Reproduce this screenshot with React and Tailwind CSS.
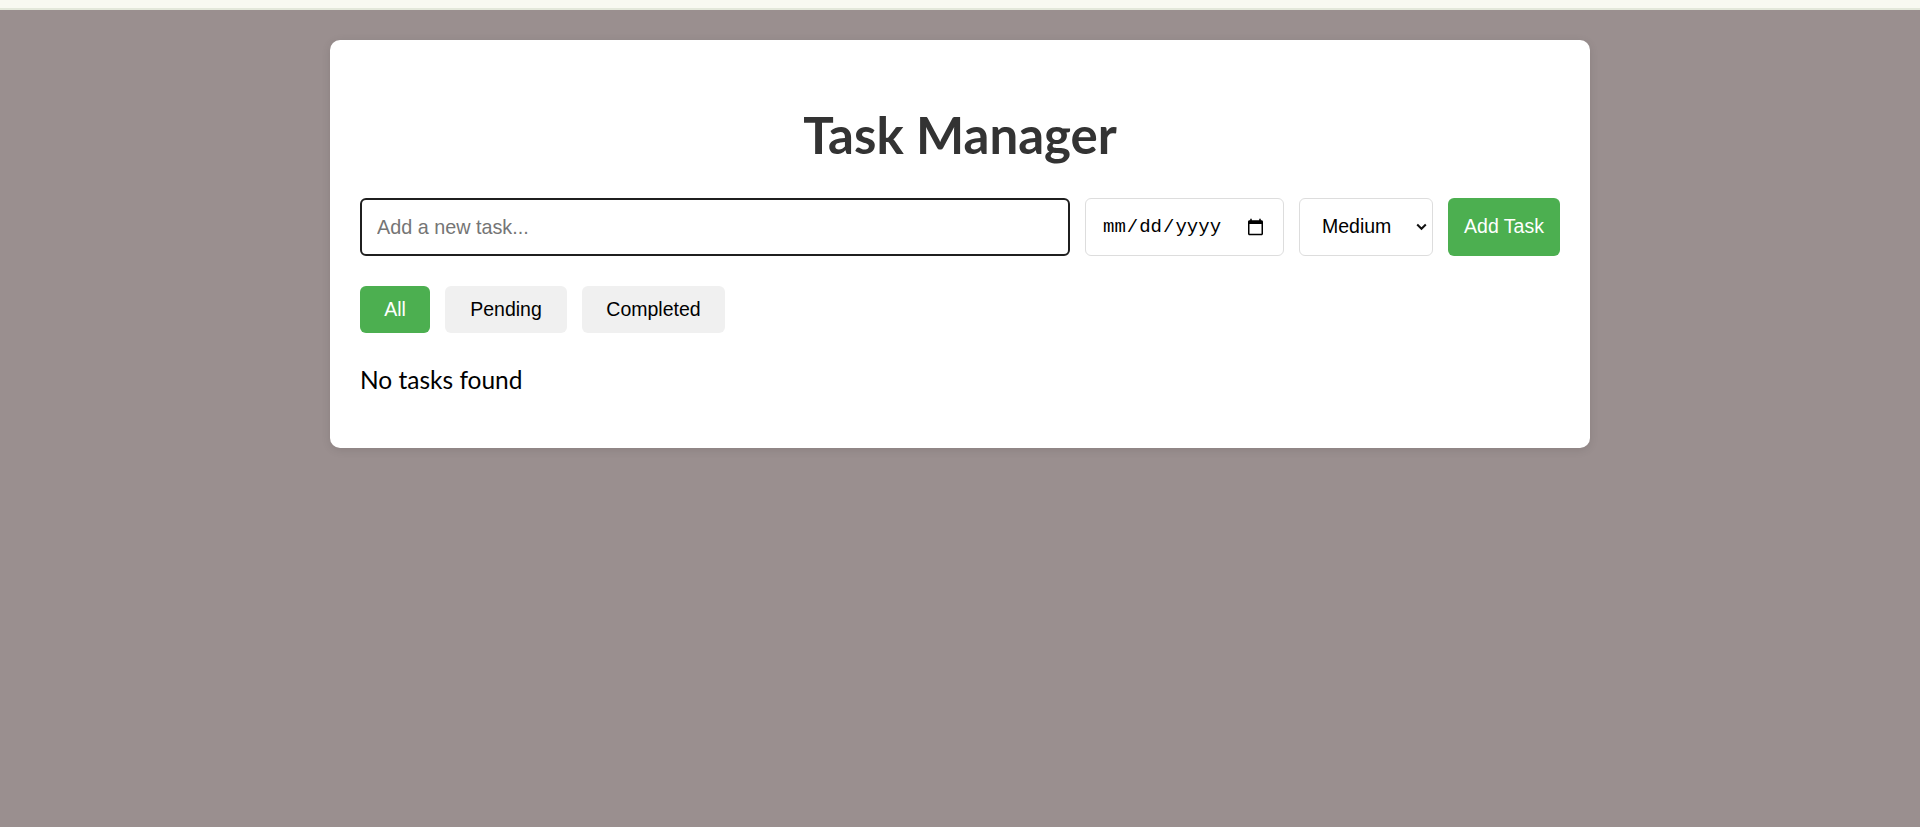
import React, { useState } from "react";

const filters = [
  { key: "all", label: "All", width: "w-[70px]" },
  { key: "pending", label: "Pending", width: "w-[122px]" },
  { key: "completed", label: "Completed", width: "w-[143px]" },
];

export default function App() {
  const [filter, setFilter] = useState("all");
  const [text, setText] = useState("");
  const [priority, setPriority] = useState("medium");

  return (
    <div className="min-h-screen bg-[#9a8f8f]">
      <div className="h-[10px] bg-[#f8f9f1] border-b-2 border-[#e3e8da]" />
      <div className="mx-auto mt-[30px] w-[1260px] rounded-[10px] bg-white px-[30px] pt-[30px] pb-[54px] shadow-[0_2px_10px_rgba(0,0,0,0.1)]">
        <h1 className="mt-[35px] h-[60px] text-center font-['Lato',sans-serif] text-[51px] font-bold leading-[60px] text-[#333]">
          Task Manager
        </h1>

        <div className="mt-[33px] flex h-[58px] gap-[15px] font-['Liberation_Sans',Arial,sans-serif]">
          <input
            type="text"
            value={text}
            onChange={(e) => setText(e.target.value)}
            placeholder="Add a new task..."
            className="h-full flex-1 rounded-[6px] border-2 border-[#1f1f1f] px-[15px] font-['Liberation_Sans',Arial,sans-serif] text-[19.8px] text-black outline-none placeholder:text-[#757575]"
          />
          <input
            type="date"
            className="h-full w-[199px] rounded-[6px] border border-[#dddddd] bg-white pl-[16px] pr-[16px] font-['Liberation_Mono',monospace] text-[19px] text-black outline-none"
          />
          <div className="relative h-full w-[134px]">
            <select
              value={priority}
              onChange={(e) => setPriority(e.target.value)}
              className="h-full w-full appearance-none rounded-[6px] border border-[#dddddd] bg-white pl-[22px] pr-[30px] text-[19.5px] text-black outline-none"
            >
              <option value="low">Low</option>
              <option value="medium">Medium</option>
              <option value="high">High</option>
            </select>
            <svg
              className="pointer-events-none absolute right-[6px] top-1/2 -translate-y-1/2"
              width="11"
              height="8"
              viewBox="0 0 11 8"
              fill="none"
            >
              <path d="M1.2 1.5L5.5 5.8L9.8 1.5" stroke="#111" strokeWidth="2" />
            </svg>
          </div>
          <button className="h-full w-[112px] rounded-[6px] bg-[#4caf50] text-[19.5px] text-white">
            Add Task
          </button>
        </div>

        <div className="mt-[30px] flex h-[47px] gap-[15px] font-['Liberation_Sans',Arial,sans-serif]">
          {filters.map((f) => (
            <button
              key={f.key}
              onClick={() => setFilter(f.key)}
              className={
                filter === f.key
                  ? `${f.width} h-full rounded-[6px] bg-[#4caf50] text-[19.5px] text-white`
                  : `${f.width} h-full rounded-[6px] bg-[#f0f0f0] text-[19.5px] text-black`
              }
            >
              {f.label}
            </button>
          ))}
        </div>

        <p className="mt-[32px] font-['Lato',sans-serif] text-[24.5px] leading-[29px] text-black">
          No tasks found
        </p>
      </div>
    </div>
  );
}
